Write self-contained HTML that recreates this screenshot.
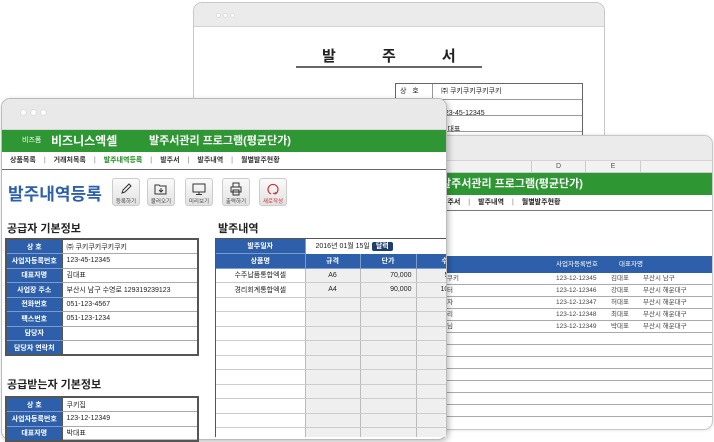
<!DOCTYPE html>
<html><head><meta charset="utf-8"><style>
*{margin:0;padding:0;box-sizing:border-box}
body{width:714px;height:442px;background:#fff;position:relative;overflow:hidden;font-family:"Liberation Sans","Noto Sans CJK KR",sans-serif;font-size:8px;color:#222}
.abs{position:absolute}
.win{position:absolute;background:#fff;border:1px solid #c8c8c8;border-radius:9px;overflow:hidden}
.bar{position:absolute;left:0;right:0;top:0;background:#ebebeb;border-bottom:1px solid #d4d4d4}
.dot{position:absolute;width:7px;height:7px;border-radius:50%;background:#fff;border:1px solid #ddd}
table{border-collapse:collapse;position:absolute;table-layout:fixed}
td{font-size:7px;overflow:hidden;white-space:nowrap;padding:0 4px}
.lt td{height:14.5px;border:1px solid #aaa}
.lt td.h{background:#2d5fab;color:#fff;text-align:center;font-weight:bold;border-color:#fff #555 #7d9acb #555}
.lt{border:2px solid #555}
.rt td{height:14.5px;border-right:1px solid #bbb;border-bottom:1px solid #ccc;text-align:center}
.rt td.h{background:#2d5fab;color:#fff;font-weight:bold;border-color:#7d9acb}
.g{background:#efefef}
.nav span{margin:0 6px}
.btn{position:absolute;top:178px;width:28px;height:28px;border:1px solid #ccc;border-radius:3px;background:linear-gradient(#fafafa,#e2e2e2);font-size:5.5px;text-align:center;color:#444}
.btn svg{display:block;margin:3px auto 1px}
.r{height:12px;border-bottom:1px solid #aaa;position:relative;line-height:11px}
.r span{position:absolute;top:0}
</style></head><body>

<!-- back window 1 -->
<div class="win" style="left:193px;top:2px;width:412px;height:180px">
 <div class="bar" style="height:24px"></div>
 <div class="dot" style="left:22px;top:10px;width:5px;height:5px"></div>
 <div class="dot" style="left:29px;top:10px;width:5px;height:5px"></div>
 <div class="dot" style="left:36px;top:10px;width:5px;height:5px"></div>
 <div class="abs" style="left:128px;top:42px;font-size:15px;font-weight:bold;word-spacing:42px">발 주 서</div>
 <div class="abs" style="left:102px;top:63px;width:186px;height:2px;background:#666"></div>
 <div class="abs" style="left:201px;top:80px;width:188px;height:70px;border:1px solid #666">
  <div style="height:16px;border-bottom:1px solid #999;font-size:7px;line-height:15px"><span style="display:inline-block;width:37px;border-right:1px solid #999;padding-left:4px">상 &nbsp; 호</span><span style="padding-left:8px">㈜ 쿠키쿠키쿠키쿠키</span></div>
  <div style="height:16px;border-bottom:1px solid #999;font-size:7px;line-height:15px"><span style="display:inline-block;width:37px;border-right:1px solid #999;height:15px"></span><span style="padding-left:8px">123-45-12345</span></div>
  <div style="height:16px;border-bottom:1px solid #999;font-size:7px;line-height:15px"><span style="display:inline-block;width:37px;border-right:1px solid #999;height:15px"></span><span style="padding-left:8px">김대표</span></div>
 </div>
</div>

<!-- back window 2 -->
<div class="win" style="left:420px;top:135px;width:293px;height:295px;box-shadow:0 0 3px rgba(0,0,0,.15)">
 <div class="bar" style="height:25px"></div>
 <div class="abs" style="left:0;right:0;top:25px;height:12px;background:#f2f2f2;border-bottom:1px solid #ccc;font-size:7px;color:#555">
  <span class="abs" style="left:110px;width:55px;height:12px;border-left:1px solid #ccc;border-right:1px solid #ccc;text-align:center;line-height:11px">D</span>
  <span class="abs" style="left:165px;width:55px;height:12px;border-right:1px solid #ccc;text-align:center;line-height:11px">E</span>
 </div>
 <div class="abs" style="left:0;right:0;top:37px;height:22px;background:#2e9633;color:#fff;font-size:11px;font-weight:bold;line-height:22px;padding-left:20px">발주서관리 프로그램(평균단가)</div>
 <div class="abs nav" style="left:0;right:0;top:59px;height:16px;border-bottom:1px solid #777;font-size:7px;font-weight:bold;line-height:15px;padding-left:20px">발주서 <span style="color:#aaa">|</span> 발주내역 <span style="color:#aaa">|</span> 월별발주현황</div>
 <div class="abs" style="left:0;right:0;top:120px;height:17px;background:#2d5fab;color:#fff;font-size:6.5px;line-height:17px"><span class="abs" style="left:135px">사업자등록번호</span><span class="abs" style="left:198px">대표자명</span></div>
 <div class="abs" style="left:0;right:0;top:137px;font-size:6.5px;color:#444">
  <div class="r"><span style="left:135px">123-12-12345</span><span style="left:190px">김대표</span><span style="left:222px">부산시 남구</span><span style="left:26px">쿠키</span></div>
  <div class="r"><span style="left:135px">123-12-12346</span><span style="left:190px">강대표</span><span style="left:222px">부산시 해운대구</span><span style="left:26px">터</span></div>
  <div class="r"><span style="left:135px">123-12-12347</span><span style="left:190px">허대표</span><span style="left:222px">부산시 해운대구</span><span style="left:26px">자</span></div>
  <div class="r"><span style="left:135px">123-12-12348</span><span style="left:190px">최대표</span><span style="left:222px">부산시 해운대구</span><span style="left:26px">리</span></div>
  <div class="r"><span style="left:135px">123-12-12349</span><span style="left:190px">박대표</span><span style="left:222px">부산시 해운대구</span><span style="left:26px">님</span></div>
  <div class="r"></div><div class="r"></div><div class="r"></div><div class="r"></div><div class="r"></div><div class="r"></div><div class="r"></div>
 </div>
</div>

<!-- front window -->
<div class="win" style="left:1px;top:98px;width:446px;height:342px;box-shadow:2px 2px 6px rgba(0,0,0,.25);border-color:#bbb">
 <div class="bar" style="height:31px;background:#e9e9e9"></div>
 <div class="dot" style="left:18px;top:10px"></div>
 <div class="dot" style="left:28px;top:10px"></div>
 <div class="dot" style="left:38px;top:10px"></div>
 <div class="abs" style="left:0;right:0;top:31px;height:22px;background:#2e9633;color:#fff;line-height:22px">
  <span class="abs" style="left:20px;font-size:7px">비즈폼</span>
  <span class="abs" style="left:49px;font-size:12px;font-weight:bold">비즈니스엑셀</span>
  <span class="abs" style="left:147px;font-size:11px;font-weight:bold">발주서관리 프로그램(평균단가)</span>
 </div>
 <div class="abs nav" style="left:0;right:0;top:53px;height:18px;border-bottom:1.5px solid #666;font-size:7px;font-weight:bold;line-height:17px;padding-left:8px;color:#333">상품목록 <span style="color:#aaa">|</span> 거래처목록 <span style="color:#aaa">|</span> <b style="color:#3a9a3a">발주내역등록</b> <span style="color:#aaa">|</span> 발주서 <span style="color:#aaa">|</span> 발주내역 <span style="color:#aaa">|</span> 월별발주현황</div>
</div>
<div class="abs" style="left:8px;top:180px;font-size:17px;font-weight:bold;color:#2d5fab">발주내역등록</div>

<div class="btn" style="left:112px"><svg width="14" height="14" viewBox="0 0 14 14" fill="none" stroke="#333" stroke-width="1"><path d="M3 11l1-3 6-6 2 2-6 6z M3 11l3-1"/></svg>등록하기</div>
<div class="btn" style="left:147px"><svg width="14" height="14" viewBox="0 0 14 14" fill="none" stroke="#333" stroke-width="1"><path d="M1 3h4l1 1h6v8H1z M7 6v4 M5 8l2 2 2-2"/></svg>불러오기</div>
<div class="btn" style="left:185px"><svg width="14" height="14" viewBox="0 0 14 14" fill="none" stroke="#333" stroke-width="1"><path d="M1 2h12v8H1z M7 10v2 M4 12.5h6"/></svg>미리보기</div>
<div class="btn" style="left:222px"><svg width="14" height="14" viewBox="0 0 14 14" fill="none" stroke="#333" stroke-width="1"><path d="M4 5V1h6v4 M2 5h10v5H2z M4 8h6v5H4z"/></svg>출력하기</div>
<div class="btn" style="left:259px;color:#c33"><svg width="14" height="14" viewBox="0 0 14 14" fill="none" stroke="#c33" stroke-width="1.2"><path d="M5 12A5 5 0 1 1 9 12 M9 12l-2-1 M9 12l1-2"/></svg>새로작성</div>

<div class="abs" style="left:7px;top:220px;font-size:11px;font-weight:bold">공급자 기본정보</div>
<table class="lt" style="left:5px;top:238px;width:194px">
<col style="width:56px"><col>
<tr><td class="h">상 호</td><td>㈜ 쿠키쿠키쿠키쿠키</td></tr>
<tr><td class="h">사업자등록번호</td><td>123-45-12345</td></tr>
<tr><td class="h">대표자명</td><td>김대표</td></tr>
<tr><td class="h">사업장 주소</td><td>부산시 남구 수영로 129319239123</td></tr>
<tr><td class="h">전화번호</td><td>051-123-4567</td></tr>
<tr><td class="h">팩스번호</td><td>051-123-1234</td></tr>
<tr><td class="h">담당자</td><td></td></tr>
<tr><td class="h">담당자 연락처</td><td></td></tr>
</table>

<div class="abs" style="left:7px;top:376px;font-size:11px;font-weight:bold">공급받는자 기본정보</div>
<table class="lt" style="left:5px;top:396px;width:194px">
<col style="width:56px"><col>
<tr><td class="h">상 호</td><td>쿠키집</td></tr>
<tr><td class="h">사업자등록번호</td><td>123-12-12349</td></tr>
<tr><td class="h">대표자명</td><td>박대표</td></tr>
</table>

<div class="abs" style="left:218px;top:220px;font-size:11px;font-weight:bold">발주내역</div>
<div class="abs" style="left:215px;top:238px;width:231px;height:199px;overflow:hidden;border-left:1.5px solid #555;border-top:1.5px solid #555">
<table class="rt" style="left:0;top:0;width:280px">
<col style="width:89px"><col style="width:55px"><col style="width:56px"><col style="width:80px">
<tr><td class="h">발주일자</td><td colspan="3" style="text-align:left;padding-left:10px;border:none">2016년 01월 15일 <span style="background:#1f3e6e;color:#fff;padding:1px 4px;font-weight:bold;border-radius:2px">달력</span></td></tr>
<tr><td class="h">상품명</td><td class="h">규격</td><td class="h">단가</td><td class="h" style="text-align:left;padding-left:25px">수량</td></tr>
<tr><td>수주납품통합엑셀</td><td class="g">A6</td><td class="g" style="text-align:right">70,000</td><td class="g" style="text-align:left;padding-left:28px">5</td></tr>
<tr><td>경리회계통합엑셀</td><td class="g">A4</td><td class="g" style="text-align:right">90,000</td><td class="g" style="text-align:left;padding-left:24px">10</td></tr>
<tr><td></td><td class="g"></td><td class="g"></td><td class="g"></td></tr>
<tr><td></td><td class="g"></td><td class="g"></td><td class="g"></td></tr>
<tr><td></td><td class="g"></td><td class="g"></td><td class="g"></td></tr>
<tr><td></td><td class="g"></td><td class="g"></td><td class="g"></td></tr>
<tr><td></td><td class="g"></td><td class="g"></td><td class="g"></td></tr>
<tr><td></td><td class="g"></td><td class="g"></td><td class="g"></td></tr>
<tr><td></td><td class="g"></td><td class="g"></td><td class="g"></td></tr>
<tr><td></td><td class="g"></td><td class="g"></td><td class="g"></td></tr>
<tr><td></td><td class="g"></td><td class="g"></td><td class="g"></td></tr>
<tr><td></td><td class="g"></td><td class="g"></td><td class="g"></td></tr>
</table>
</div>
</body></html>
